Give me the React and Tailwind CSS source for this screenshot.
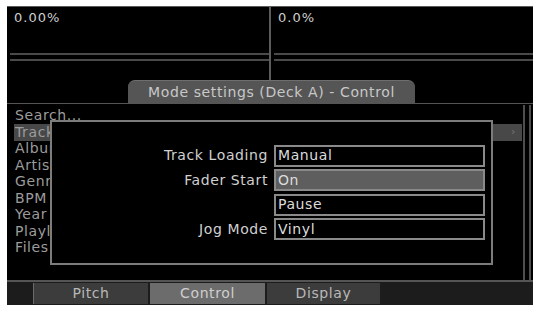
import React from 'react';

const font = { fontFamily: '"DejaVu Sans", "Liberation Sans", sans-serif' };

const listItems = ['Search...', 'Track', 'Album', 'Artist', 'Genre', 'BPM', 'Year', 'Playlist', 'Files'];

const settings = [
  { label: 'Track Loading', value: 'Manual' },
  { label: 'Fader Start', value: 'On', active: true },
  { label: '', value: 'Pause' },
  { label: 'Jog Mode', value: 'Vinyl' },
];

const Deck = ({ value, divider }) => (
  <div className={`flex-1 flex flex-col ${divider ? 'border-r-2 border-[#5c5c5c]' : ''}`}>
    <div className="pl-[7px] pt-[3px] h-[46px] text-[13px] leading-[16px] tracking-[1px] text-[#cfcfcf]">{value}</div>
    <div className="ml-[3px] h-[8px] border-y-2 border-[#4a4a4a]" />
  </div>
);

export default function App() {
  return (
    <div className="w-[537px] h-[309px] bg-white pl-[7px] pt-[6px]" style={font}>
      <div className="w-[526px] h-[299px] bg-black flex flex-col">
        {/* Decks */}
        <div className="h-[74px] flex border-t border-[#5a5a5a]">
          <Deck value="0.00%" divider />
          <Deck value="0.0%" />
        </div>

        {/* Header tab */}
        <div className="h-[23px] flex">
          <div className="w-[264px] border-r-2 border-[#5c5c5c] h-[0px]" />
        </div>
        <div className="relative h-[0px]">
          <div className="absolute left-[121px] top-[-23px] w-[287px] h-[24px] bg-[#555555] rounded-t-[7px] border-t border-[#6e6e6e] flex items-center justify-center text-[14px] tracking-[0.6px] text-[#c8c8c8]">
            Mode settings (Deck A) - Control
          </div>
        </div>

        {/* Browser panel */}
        <div className="relative h-[180px] flex border-t border-b-2 border-[#555555]">
          <div className="flex-1 pl-[7px] pt-[4px] mr-[1px]">
            {listItems.map((item) => (
              <div
                key={item}
                className={`h-[16.5px] px-[1px] flex items-center justify-between text-[14px] tracking-[0.6px] text-[#9c9c9c] ${
                  item === 'Track' ? 'bg-[#484848]' : ''
                }`}
              >
                <span>{item}</span>
                {item === 'Track' && <span className="pr-[5px] text-[11px] text-[#777]">›</span>}
              </div>
            ))}
          </div>
          <div className="w-[8px] mr-[2px] mt-[1px] border-x-2 border-[#4e4e4e]" />

          {/* Dialog */}
          <div className="absolute left-[43px] top-[16px] w-[443px] h-[145px] bg-black border-2 border-[#7c7c7c] pt-[23px]">
            <div className="grid grid-cols-[216px_211px] gap-x-[6px] gap-y-[2.5px]">
              {settings.map((s, i) => (
                <React.Fragment key={i}>
                  <div className="h-[22px] flex items-center justify-end text-[14px] tracking-[0.6px] text-[#d0d0d0]">{s.label}</div>
                  <div
                    className={`h-[22px] flex items-center pl-[2px] border-2 border-[#8a8a8a] text-[14px] tracking-[0.6px] text-[#dcdcdc] ${
                      s.active ? 'bg-[#5e5e5e]' : 'bg-black'
                    }`}
                  >
                    {s.value}
                  </div>
                </React.Fragment>
              ))}
            </div>
          </div>
        </div>

        {/* Bottom tabs */}
        <div className="flex-1 bg-[#1c1c1c] flex gap-[2px] pl-[26px] pt-[1px] pb-[1px]">
          <div className="w-[115px] bg-[#3c3c3c] border-l border-[#6a6a6a] flex items-center justify-center text-[14px] tracking-[0.6px] text-[#b8b8b8]">Pitch</div>
          <div className="w-[115px] bg-[#6c6c6c] flex items-center justify-center text-[14px] tracking-[0.6px] text-[#cfcfcf]">Control</div>
          <div className="w-[113px] bg-[#3c3c3c] flex items-center justify-center text-[14px] tracking-[0.6px] text-[#b8b8b8]">Display</div>
        </div>
      </div>
    </div>
  );
}
